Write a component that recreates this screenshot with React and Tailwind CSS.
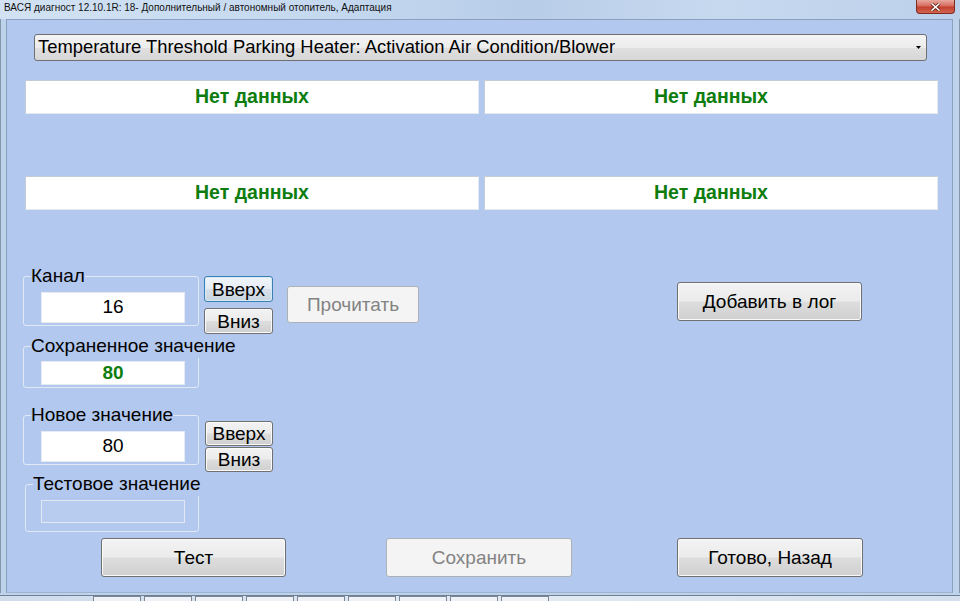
import React from "react";

const Btn = ({ children, className = "", disabled = false, focused = false }) => {
  let look =
    "border-[#707070] text-black bg-[linear-gradient(to_bottom,#f3f3f3_0%,#ebebeb_48%,#dddddd_52%,#cfcfcf_100%)] shadow-[inset_0_0_0_1px_#fafafa]";
  if (disabled) look = "border-[#adb2b5] bg-[#f4f4f4] text-[#838383]";
  if (focused)
    look =
      "border-[#3c7fb1] text-black bg-[linear-gradient(to_bottom,#f1f5f9_0%,#e6edf4_48%,#d6dfe8_52%,#cad5e0_100%)] shadow-[inset_0_0_0_1px_#d6ecfa]";
  return (
    <button
      className={`flex items-center justify-center border rounded-[3px] text-[19px] leading-none ${look} ${className}`}
    >
      {children}
    </button>
  );
};

const Group = ({ label, className = "", legendClass = "ml-[7px]", children }) => (
  <fieldset className={`min-w-0 border border-[#e2e9f6] rounded-[3px] ${className}`}>
    <legend className={`whitespace-nowrap text-[19px] leading-[20px] pt-[2px] pb-[2px] text-black ${legendClass}`}>
      {label}
    </legend>
    {children}
  </fieldset>
);

const DataBox = () => (
  <div className="w-[454px] h-[34px] flex items-center justify-center bg-white border border-[#e4e9f0] border-t-[#c4ccd6] border-l-[#c4ccd6] text-[19.5px] font-bold text-[#0e7d0e]">
    Нет данных
  </div>
);

export default function App() {
  const tabs = [0, 1, 2, 3, 4, 5, 6, 7, 8];

  return (
    <div className="w-[960px] h-[601px] overflow-hidden flex flex-col bg-[#bed3ec] font-['Liberation_Sans',Arial,sans-serif] select-none">
      {/* title bar */}
      <div className="h-[19px] flex items-start bg-[linear-gradient(to_right,#d2e2f4_0%,#c4d8ef_35%,#b8cde8_55%,#c7d9ef_75%,#bcd0ea_100%)]">
        <div className="pl-[4px] text-[10px] leading-[16px] text-[#111] whitespace-nowrap">
          ВАСЯ диагност 12.10.1R: 18- Дополнительный / автономный отопитель, Адаптация
        </div>
        <div className="ml-auto mr-[5px] w-[39px] h-[14px] flex items-center justify-center rounded-b-[4px] border border-t-0 border-[#7e2b22] bg-[linear-gradient(to_bottom,#e9a99f_0%,#d66b5e_45%,#c4402f_55%,#d0664f_100%)]">
          <svg width="11" height="8" viewBox="0 0 11 8">
            <path d="M1.5 0.5 L9.5 7.5 M9.5 0.5 L1.5 7.5" stroke="#5a1a12" strokeWidth="3" />
            <path d="M1.5 0.5 L9.5 7.5 M9.5 0.5 L1.5 7.5" stroke="#ffffff" strokeWidth="1.6" />
          </svg>
        </div>
      </div>

      {/* middle: frame + client */}
      <div className="flex h-[574px]">
        <div className="w-[6px] border-l border-[#8797ab] bg-[#bdd2eb]" />
        <div className="w-[947px] flex flex-col border border-[#8aa0be] border-b-[#9fb3cf] bg-[#b3c8ee]">
          {/* combobox */}
          <div className="mt-[14px] ml-[27px] w-[893px] h-[27px] flex items-center justify-between border border-[#707070] rounded-[3px] bg-[linear-gradient(to_bottom,#f4f4f4_0%,#ececec_50%,#e0e0e0_51%,#d6d6d6_100%)] pl-[3px] pr-[5px]">
            <span className="text-[18.4px] leading-none text-black whitespace-nowrap">
              Temperature Threshold Parking Heater: Activation Air Condition/Blower
            </span>
            <svg width="5" height="3" viewBox="0 0 5 3">
              <path d="M0 0 H5 L2.5 3 Z" fill="#000" />
            </svg>
          </div>

          {/* data rows */}
          <div className="mt-[19px] ml-[18px] flex gap-[5px]">
            <DataBox />
            <DataBox />
          </div>
          <div className="mt-[62px] ml-[18px] flex gap-[5px]">
            <DataBox />
            <DataBox />
          </div>

          {/* lower section */}
          <div className="mt-[54px] ml-[16px] flex flex-col">
            <div className="flex items-start">
              <div className="flex flex-col w-[250px]">
                {/* Канал */}
                <div className="flex items-start">
                  <Group label="Канал" className="w-[176px] pb-[2px]">
                    <div className="mt-[4px] ml-[17px] w-[144px] h-[31px] flex items-center justify-center bg-white border border-[#e6ebf2] text-[19px] text-black">
                      16
                    </div>
                  </Group>
                  <div className="ml-[5px] mt-[12px] flex flex-col gap-[6px]">
                    <Btn focused className="w-[69px] h-[26px]">Вверх</Btn>
                    <Btn className="w-[69px] h-[26px]">Вниз</Btn>
                  </div>
                </div>

                {/* Сохраненное значение */}
                <Group label="Сохраненное значение" className="w-[176px] pb-[2px]">
                  <div className="mt-[3px] ml-[17px] w-[144px] h-[24px] flex items-center justify-center bg-white border border-[#e6ebf2] text-[19px] font-bold text-[#0e7d0e]">
                    80
                  </div>
                </Group>

                {/* Новое значение */}
                <div className="mt-[15px] flex items-start">
                  <Group label="Новое значение" className="w-[176px] pb-[2px]">
                    <div className="mt-[4px] ml-[17px] w-[144px] h-[31px] flex items-center justify-center bg-white border border-[#e6ebf2] text-[19px] text-black">
                      80
                    </div>
                  </Group>
                  <div className="ml-[6px] mt-[18px] flex flex-col gap-[1px]">
                    <Btn className="w-[68px] h-[25px]">Вверх</Btn>
                    <Btn className="w-[68px] h-[25px]">Вниз</Btn>
                  </div>
                </div>

                {/* Тестовое значение */}
                <Group label="Тестовое значение" className="ml-[2px] w-[174px] pb-[8px]" legendClass="ml-[7px]">
                  <div className="mt-[4px] ml-[15px] w-[144px] h-[23px] bg-[#b8ccf0] border border-[#e2e8f2]" />
                </Group>
              </div>

              <Btn disabled className="ml-[14px] mt-[22px] w-[132px] h-[37px]">
                Прочитать
              </Btn>
              <Btn className="ml-[258px] mt-[18px] w-[185px] h-[39px]">Добавить в лог</Btn>
            </div>

            {/* bottom buttons */}
            <div className="mt-[6px] flex">
              <Btn className="ml-[78px] w-[185px] h-[39px]">Тест</Btn>
              <Btn disabled className="ml-[100px] w-[186px] h-[39px]">
                Сохранить
              </Btn>
              <Btn className="ml-[105px] w-[186px] h-[39px]">Готово, Назад</Btn>
            </div>
          </div>
        </div>
        <div className="w-[7px] border-r border-[#8797ab] bg-[#bdd2eb]" />
      </div>

      {/* bottom frame and strip of tabs behind */}
      <div className="h-[3px] bg-[#bdd2eb] border-b border-[#6f7f94]" />
      <div className="h-[5px] flex bg-[linear-gradient(to_right,#cfdcec,#e4ebf3_50%,#d3dfee)]">
        <div className="ml-[93px] flex gap-[3px]">
          {tabs.map((t) => (
            <div key={t} className="w-[48px] h-[5px] border border-b-0 border-[#7b8796] bg-[#eef2f7]" />
          ))}
        </div>
      </div>
    </div>
  );
}
